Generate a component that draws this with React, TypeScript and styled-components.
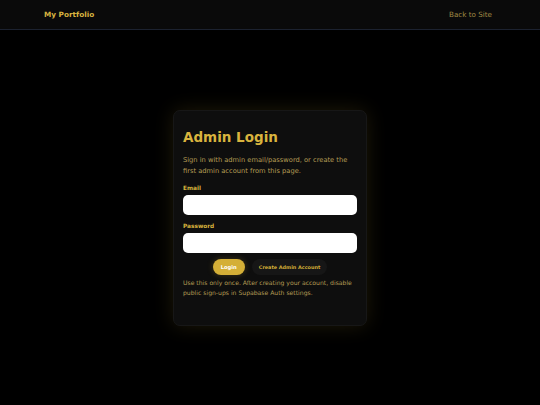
import React, {FC} from 'react';
import styled, {createGlobalStyle} from 'styled-components';

const GlobalStyle = createGlobalStyle`
  * { box-sizing: border-box; }
  html, body {
    margin: 0;
    padding: 0;
    background: #000;
    font-family: "DejaVu Sans", "Noto Sans", sans-serif;
  }
`

const Page = styled.div`
  min-height: 100vh;
  display: flex;
  flex-direction: column;
  background: #000;
`

const Header = styled.header`
  height: 30px;
  background: #0a0a0a;
  border-bottom: 1px solid #1c2230;
  display: flex;
  align-items: center;
  justify-content: space-between;
  padding: 0 48px 0 44px;
`

const Brand = styled.a`
  color: #d8b440;
  font-size: 7.3px;
  font-weight: 700;
`

const BackLink = styled.a`
  color: #a08a45;
  font-size: 7.2px;
`

const Main = styled.main`
  flex: 1;
  display: flex;
  align-items: center;
  justify-content: center;
`

const Card = styled.div`
  width: 194px;
  height: 216px;
  background: #0e0e0e;
  border: 1px solid #171717;
  border-radius: 7px;
  padding: 16px 9px 20px;
  box-shadow: 0 0 20px rgba(212, 175, 55, 0.14);
`

const Title = styled.h1`
  margin: 0;
  color: #d9b43e;
  font-size: 13.5px;
  font-weight: 700;
  line-height: 20px;
`

const Lead = styled.p`
  margin: 8px 0 7px;
  color: #b59d55;
  font-size: 6.7px;
  line-height: 11px;
`

const Label = styled.label`
  display: block;
  color: #d9b43e;
  font-size: 5.8px;
  font-weight: 700;
  line-height: 8px;
  margin-bottom: 3px;
`

const Input = styled.input`
  display: block;
  width: 100%;
  height: 20px;
  border: none;
  border-radius: 5px;
  background: #fff;
  margin-bottom: 7px;

  &:last-of-type {
    margin-bottom: 6px;
  }
`

const Actions = styled.div`
  display: flex;
  justify-content: center;
  gap: 7px;
`

const Button = styled.button<{$primary?: boolean}>`
  height: 16px;
  border: none;
  border-radius: 8px;
  padding: 0 ${p => (p.$primary ? '8px' : '7px')};
  font-family: inherit;
  font-size: ${p => (p.$primary ? '5.2px' : '4.9px')};
  font-weight: 700;
  background: ${p => (p.$primary ? '#d4af37' : '#161616')};
  color: ${p => (p.$primary ? '#fff' : '#d4af37')};
  box-shadow: ${p => (p.$primary ? '0 0 6px rgba(212,175,55,0.25)' : 'none')};
`

const Note = styled.p`
  margin: 3px 0 0;
  color: #b59d55;
  font-size: 6.1px;
  line-height: 10px;
`

const App: FC = () => {
    return (
        <Page>
            <GlobalStyle />
            <Header>
                <Brand>My Portfolio</Brand>
                <BackLink>Back to Site</BackLink>
            </Header>
            <Main>
                <Card>
                    <Title>Admin Login</Title>
                    <Lead>Sign in with admin email/password, or create the first admin account from this page.</Lead>
                    <Label>Email</Label>
                    <Input type="email" />
                    <Label>Password</Label>
                    <Input type="password" />
                    <Actions>
                        <Button $primary>Login</Button>
                        <Button>Create Admin Account</Button>
                    </Actions>
                    <Note>Use this only once. After creating your account, disable public sign-ups in Supabase Auth settings.</Note>
                </Card>
            </Main>
        </Page>
    );
};

export default App;
